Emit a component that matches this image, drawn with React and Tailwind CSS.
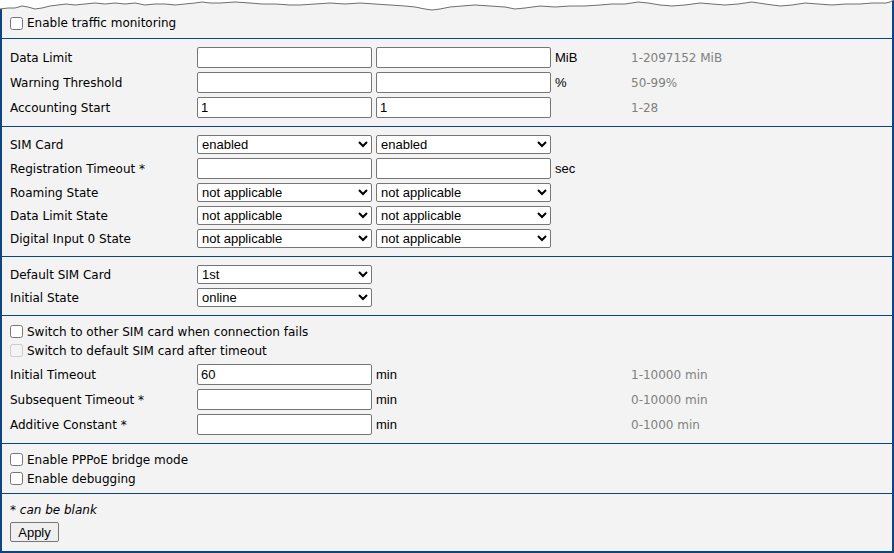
import React from "react";

const EDGE = "0,9 8,8 15,8 22,6 28,7 35,9 42,8 50,6 58,5 66,4 75,5 85,4 95,3 105,4 115,3 125,4 135,3 145,5 155,4 165,4 175,5 185,4 195,3 202,2 210,3 220,3 235,2 250,3 262,4 275,4 290,5 300,5 315,4 330,3 345,4 360,3 375,4 390,5 405,6 415,7 425,9 432,10 440,9 450,7 462,6 475,5 490,6 505,7 515,9 525,8 540,6 555,7 570,6 585,6 600,5 612,4 625,4 638,2 648,3 660,5 672,6 685,5 700,3 712,4 725,5 738,4 752,2 765,4 780,6 792,5 805,3 818,4 832,5 846,4 860,4 872,3 886,3 890,2 894,0";

function TextInput({ value = "" }) {
  return (
    <input
      type="text"
      defaultValue={value}
      className="w-[175px] h-[21px] border border-[#767676] rounded-[2px] bg-white px-[3px] text-[13px] text-black font-['Liberation_Sans',Arial,sans-serif] outline-none"
    />
  );
}

function Select({ value, options }) {
  return (
    <select
      defaultValue={value}
      className="w-[175px] h-[19px] border border-[#767676] rounded-[2px] bg-white pl-0 text-[13px] leading-[15px] text-black font-['Liberation_Sans',Arial,sans-serif] outline-none"
    >
      {options.map((o) => (
        <option key={o}>{o}</option>
      ))}
    </select>
  );
}

function Row({ label, a, b, unit, hint, h = "h-[25px]" }) {
  return (
    <div className={`grid grid-cols-[187px_179px_179px_76px_1fr] items-center ${h}`}>
      <div>{label}</div>
      <div className="flex items-center">{a}</div>
      <div className="flex items-center">{b}</div>
      <div className="font-['Liberation_Sans',Arial,sans-serif] text-[13px]">{unit}</div>
      <div className="text-[#808080]">{hint}</div>
    </div>
  );
}

function Check({ label, disabled, h = "h-[19px]" }) {
  return (
    <label className={`flex items-center ${h}`}>
      <input
        type="checkbox"
        disabled={disabled}
        className="w-[13px] h-[13px] m-0 mr-[4px]"
      />
      <span>{label}</span>
    </label>
  );
}

const NA = ["not applicable", "yes", "no"];
const MIN = <span className="font-['Liberation_Sans',Arial,sans-serif] text-[13px]">min</span>;

export default function App() {
  const sec = "border-b border-[#0b4683] pl-[8px]";
  return (
    <div className="relative w-[894px] h-[553px] overflow-hidden bg-white">
      <div className="w-[894px] h-[553px] bg-[#f3f3f3] border-l-2 border-r-2 border-b-2 border-[#0b4683] text-[12px] text-black font-['DejaVu_Sans',Verdana,sans-serif] flex flex-col">
        <div className={`${sec} pt-[13px] pb-[5px]`}>
          <Check label="Enable traffic monitoring" h="h-[20px]" />
        </div>

        <div className={`${sec} py-[6px]`}>
          <Row label="Data Limit" a={<TextInput />} b={<TextInput />} unit="MiB" hint="1-2097152 MiB" />
          <Row label="Warning Threshold" a={<TextInput />} b={<TextInput />} unit="%" hint="50-99%" />
          <Row label="Accounting Start" a={<TextInput value="1" />} b={<TextInput value="1" />} hint="1-28" />
        </div>

        <div className={`${sec} py-[6px]`}>
          <Row h="h-[23px]" label="SIM Card" a={<Select value="enabled" options={["enabled", "disabled"]} />} b={<Select value="enabled" options={["enabled", "disabled"]} />} />
          <Row label="Registration Timeout *" a={<TextInput />} b={<TextInput />} unit="sec" />
          <Row h="h-[23px]" label="Roaming State" a={<Select value="not applicable" options={NA} />} b={<Select value="not applicable" options={NA} />} />
          <Row h="h-[23px]" label="Data Limit State" a={<Select value="not applicable" options={NA} />} b={<Select value="not applicable" options={NA} />} />
          <Row h="h-[23px]" label="Digital Input 0 State" a={<Select value="not applicable" options={NA} />} b={<Select value="not applicable" options={NA} />} />
        </div>

        <div className={`${sec} py-[6px]`}>
          <Row h="h-[23px]" label="Default SIM Card" a={<Select value="1st" options={["1st", "2nd"]} />} />
          <Row h="h-[23px]" label="Initial State" a={<Select value="online" options={["online", "offline"]} />} />
        </div>

        <div className={`${sec} pt-[6px] pb-[6px]`}>
          <Check label="Switch to other SIM card when connection fails" />
          <Check label="Switch to default SIM card after timeout" disabled />
          <div className="mt-[2px]">
            <Row label="Initial Timeout" a={<TextInput value="60" />} b={MIN} hint="1-10000 min" />
            <Row label="Subsequent Timeout *" a={<TextInput />} b={MIN} hint="0-10000 min" />
            <Row label="Additive Constant *" a={<TextInput />} b={MIN} hint="0-1000 min" />
          </div>
        </div>

        <div className={`${sec} pt-[6px] pb-[5px]`}>
          <Check label="Enable PPPoE bridge mode" />
          <Check label="Enable debugging" />
        </div>

        <div className="pl-[8px] pt-[6px] flex flex-col items-start">
          <div className="h-[20px] flex items-center italic">* can be blank</div>
          <button className="mt-[2px] w-[49px] h-[20px] border border-[#767676] rounded-[2px] bg-[#efefef] text-[13px] text-black font-['Liberation_Sans',Arial,sans-serif] leading-none">
            Apply
          </button>
        </div>
      </div>

      <svg className="absolute top-0 left-0" width="894" height="14" viewBox="0 0 894 14">
        <polygon points={`0,0 ${EDGE} 894,0`} fill="#ffffff" />
        <polyline points={EDGE} fill="none" stroke="#6e6e6e" strokeWidth="1" />
      </svg>
    </div>
  );
}
